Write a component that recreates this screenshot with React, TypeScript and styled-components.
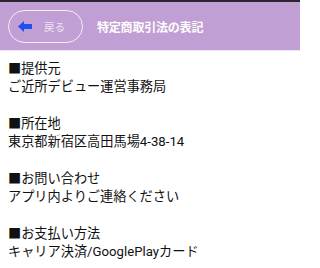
import styled, { createGlobalStyle } from 'styled-components';

const GlobalStyle = createGlobalStyle`
	html, body {
		margin: 0;
		padding: 0;
		background: #ffffff;
	}
	body {
		font-family: Roboto, "Noto Sans CJK JP", sans-serif;
		color: #111111;
	}
`;

type Item = { label: string; value: string };

const items: Item[] = [
	{ label: '提供元', value: 'ご近所デビュー運営事務局' },
	{ label: '所在地', value: '東京都新宿区高田馬場4-38-14' },
	{ label: 'お問い合わせ', value: 'アプリ内よりご連絡ください' },
	{ label: 'お支払い方法', value: 'キャリア決済/GooglePlayカード' },
];

const BackArrow = () => (
	<svg width="14" height="11" viewBox="0 0 14 11">
		<path d="M0 5.5 L6 0 L6 3 L14 3 L14 8 L6 8 L6 11 Z" fill="#1f4fef" />
	</svg>
);

export default function App() {
	return (
		<Page>
			<GlobalStyle />
			<Header>
				<BackButton type="button">
					<BackArrow />
					<BackLabel>戻る</BackLabel>
				</BackButton>
				<Title>特定商取引法の表記</Title>
			</Header>
			<Content>
				{items.map((item) => (
					<Section key={item.label}>
						<Line>■{item.label}</Line>
						<Line>{item.value}</Line>
					</Section>
				))}
			</Content>
		</Page>
	);
}

const Page = styled.div`
	width: 300px;
	height: 268px;
	overflow: hidden;
	background: #ffffff;
`;

const Header = styled.header`
	display: flex;
	align-items: center;
	gap: 14px;
	height: 48px;
	padding: 0 8px;
	border-top: 2px solid #2a2530;
	border-bottom: 1px solid #efe6f3;
	background: #c19ed3;
`;

const BackButton = styled.button`
	display: flex;
	align-items: center;
	gap: 12px;
	width: 75px;
	height: 33px;
	padding: 0 0 0 9px;
	border: 1.5px solid #f6f0f8;
	border-radius: 17px;
	background: transparent;
	cursor: pointer;
`;

const BackLabel = styled.span`
	font-family: "Noto Sans CJK JP", sans-serif;
	font-size: 10.5px;
	color: #ece4f0;
`;

const Title = styled.h1`
	margin: 0;
	font-family: "Noto Sans CJK JP", sans-serif;
	font-size: 12px;
	font-weight: 700;
	color: #ffffff;
	letter-spacing: -0.2px;
`;

const Content = styled.main`
	display: flex;
	flex-direction: column;
	gap: 19px;
	padding: 9px 8px 0;
`;

const Section = styled.section`
	display: flex;
	flex-direction: column;
`;

const Line = styled.div`
	font-size: 13.2px;
	line-height: 18px;
	white-space: nowrap;
`;
